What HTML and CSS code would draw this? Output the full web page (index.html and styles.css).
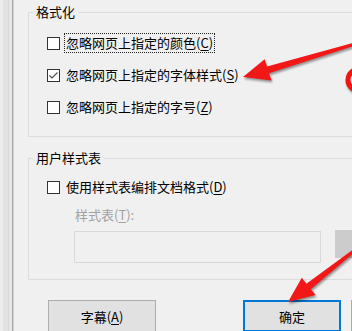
FILE: index.html
```html
<!DOCTYPE html>
<html lang="zh-CN">
<head>
  <meta charset="UTF-8">
  <title>辅助功能</title>
  <link rel="stylesheet" href="styles.css">
</head>
<body>
  <div class="window">
    <div class="side"></div>
    <div class="content">
      <!-- 格式化 -->
      <div class="group first">
        <div class="group-title">格式化</div>
        <div class="rows">
          <div class="row"><span class="box"></span><span class="label focus">忽略网页上指定的颜色(<u>C</u>)</span></div>
          <div class="row">
            <span class="box">
              <svg width="11" height="11" viewBox="0 0 11 11"><polyline points="1.5,5.5 4,8 9.5,2.5" fill="none" stroke="#4a4a4a" stroke-width="1.1"/></svg>
            </span>
            <span class="label">忽略网页上指定的字体样式(<u>S</u>)</span>
          </div>
          <div class="row"><span class="box"></span><span class="label">忽略网页上指定的字号(<u>Z</u>)</span></div>
        </div>
      </div>

      <!-- 用户样式表 -->
      <div class="group second">
        <div class="group-title">用户样式表</div>
        <div class="rows">
          <div class="row"><span class="box"></span><span class="label">使用样式表编排文档格式(<u>D</u>)</span></div>
        </div>
        <div class="sheet-label">样式表(<u>T</u>):</div>
        <div class="sheet-row">
          <div class="textbox"></div>
          <div class="browse"></div>
        </div>
      </div>

      <div class="buttons">
        <div class="btn wide">字幕(<u>A</u>)</div>
        <div class="btn default">确定</div>
        <div class="btn"></div>
      </div>
    </div>
  </div>

  <!-- annotation arrows -->
  <svg class="marks" width="352" height="331" viewBox="0 0 352 331">
    <g class="shadow">
      <polygon fill="#f21818" points="354.6,42.6 267,66.5 264.6,59.3 243,77 271.5,80.5 269,73.2 355.4,45.4"/>
      <polygon fill="#f21818" points="354.1,248.8 306.4,283.8 301.8,277.8 288,302 315.6,295 310.8,289.2 355.9,251.2"/>
      <circle cx="359" cy="80" r="11" fill="#fff" stroke="#ef1414" stroke-width="5"/>
    </g>
  </svg>
</body>
</html>
```

FILE: styles.css
```css
* {
  box-sizing: border-box;
}
body {
  margin: 0;
  width: 352px;
  height: 331px;
  overflow: hidden;
  position: relative;
  background: #f0f0f0;
  color: #000;
  font-family: "Noto Sans CJK SC", "Noto Sans", sans-serif;
  font-size: 13px;
}
u {
  text-decoration-thickness: 1px;
  text-underline-offset: 2px;
}
.window {
  display: flex;
  width: 352px;
  height: 331px;
  overflow: hidden;
}
.side {
  flex: 0 0 14px;
  background: linear-gradient(to right, #ececec 0 3px, #e2e2e2 3px 8px, #d9d9d9 8px 9px, #e7e7e7 9px 12px, #a9a9a9 12px 13px, #d2d2d2 13px 14px);
}
.content {
  flex: 1;
  min-width: 0;
  padding-left: 14px;
}
.group {
  border: 1px solid #dcdcdc;
  margin-right: -20px;
  padding: 0 0 19px 18px;
}
.group.first {
  margin-top: 12px;
}
.group.second {
  margin-top: 21px;
  padding-bottom: 16px;
}
.group-title {
  width: fit-content;
  margin: -10px 0 0 -14px;
  padding: 0 3px;
  line-height: 18px;
  background: #f0f0f0;
}
.rows {
  display: flex;
  flex-direction: column;
  gap: 12px;
  padding-top: 12px;
}
.second .rows {
  padding-top: 10px;
}
.row {
  display: flex;
  align-items: center;
  height: 20px;
}
.box {
  width: 13px;
  height: 13px;
  border: 1px solid #333;
  background: #fff;
  display: flex;
}
.label {
  margin-left: 4px;
  padding: 0 1px;
  line-height: 18px;
  border: 1px dotted transparent;
  white-space: nowrap;
}
.label.focus {
  border-color: #222;
}
.sheet-label {
  margin: 8px 0 0 28px;
  line-height: 20px;
  color: #a2a2a2;
}
.sheet-row {
  display: flex;
  margin: 6px 0 0 27px;
}
.textbox {
  flex-shrink: 0;
  width: 247px;
  height: 32px;
  border: 1px solid #d9d9d9;
  background: #f0f0f0;
}
.browse {
  flex-shrink: 0;
  width: 30px;
  height: 28px;
  margin: -1px 0 0 14px;
  background: #cccccc;
}
.buttons {
  display: flex;
  margin-top: 20px;
  padding-left: 20px;
}
.btn {
  width: 98px;
  height: 32px;
  margin-left: 10px;
  border: 1px solid #adadad;
  background: #e1e1e1;
  display: flex;
  align-items: center;
  justify-content: center;
  flex-shrink: 0;
}
.btn.wide {
  width: 108px;
  margin-left: 0;
  margin-right: 77px;
}
.btn.default {
  border: 2px solid #0078d7;
}
.marks {
  position: absolute;
  top: 0;
  left: 0;
  pointer-events: none;
}
.shadow {
  filter: drop-shadow(1px 2px 1.2px rgba(0, 0, 0, 0.4));
}
```
